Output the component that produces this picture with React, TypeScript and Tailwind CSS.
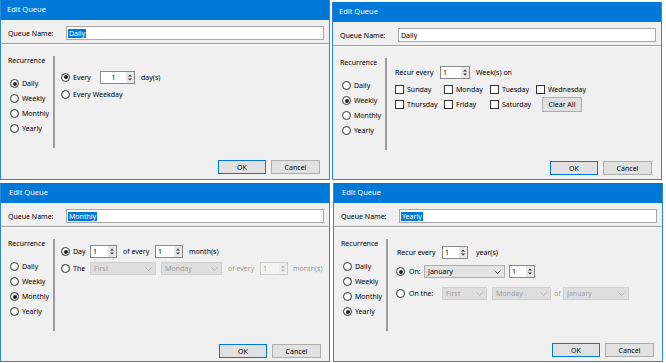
import React from "react";

type RadioProps = { checked?: boolean; label: string; className?: string; textClass?: string };

function Radio({ checked, label, className = "", textClass = "" }: RadioProps) {
  return (
    <div className={`flex items-center gap-[3px] ${className}`}>
      <span className="w-[9px] h-[9px] shrink-0 rounded-full border border-[#333333] bg-white flex items-center justify-center">
        {checked && <span className="w-[4px] h-[4px] rounded-full bg-[#222222]" />}
      </span>
      <span className={`whitespace-nowrap ${textClass}`}>{label}</span>
    </div>
  );
}

function Check({ label, className = "" }: { label: string; className?: string }) {
  return (
    <div className={`flex items-center gap-[3px] ${className}`}>
      <span className="w-[9px] h-[9px] shrink-0 border border-[#333333] bg-white" />
      <span className="whitespace-nowrap">{label}</span>
    </div>
  );
}

function Spinner({ className = "", value = "1", center = false, disabled = false }: { className?: string; value?: string; center?: boolean; disabled?: boolean }) {
  return (
    <div className={`h-[13px] flex border ${disabled ? "border-[#cccccc] bg-[#f4f4f4] text-[#a0a0a0]" : "border-[#8a8a8a] bg-white"} ${className}`}>
      <div className={`flex-1 flex items-center leading-none ${center ? "justify-center" : "pl-[2px]"}`}>{value}</div>
      <div className={`w-[8px] flex items-center justify-center ${disabled ? "bg-[#eeeeee]" : "bg-[#e8e8e8]"}`}>
        <svg width="6" height="9" viewBox="0 0 6 9">
          <path d="M1 3.5 L3 1.5 L5 3.5 Z" fill={disabled ? "#a8a8a8" : "#333333"} />
          <path d="M1 5.5 L3 7.5 L5 5.5 Z" fill={disabled ? "#a8a8a8" : "#333333"} />
        </svg>
      </div>
    </div>
  );
}

function Dropdown({ className = "", value, disabled = false }: { className?: string; value: string; disabled?: boolean }) {
  return (
    <div className={`h-[13px] flex items-center border pl-[3px] pr-[3px] ${disabled ? "border-[#d0d0d0] bg-[#dedede] text-[#9e9e9e]" : "border-[#adadad] bg-[#e3e3e3] text-black"} ${className}`}>
      <span className="flex-1 leading-none whitespace-nowrap">{value}</span>
      <svg width="7" height="4" viewBox="0 0 7 4">
        <path d="M0.5 0.5 L3.5 3.5 L6.5 0.5" fill="none" stroke={disabled ? "#a8a8a8" : "#444444"} strokeWidth="0.8" />
      </svg>
    </div>
  );
}

function Btn({ label, primary = false, className = "" }: { label: string; primary?: boolean; className?: string }) {
  return (
    <div className={`h-[14px] flex items-center justify-center bg-[#e1e1e1] border ${primary ? "border-[#0078d7]" : "border-[#adadad]"} ${className}`}>
      {label}
    </div>
  );
}

type DialogProps = {
  className?: string;
  name: string;
  highlight?: boolean;
  selected: number;
  titlePad?: string;
  footerClass?: string;
  children: React.ReactNode;
};

function Dialog({ className = "", name, highlight = false, selected, titlePad = "pl-[6px]", footerClass = "pb-[5px] pr-[9px]", children }: DialogProps) {
  const opts = ["Daily", "Weekly", "Monthly", "Yearly"];
  return (
    <div className={`w-[330px] flex flex-col bg-[#f0f0f0] border-x border-b border-[#2c88d9] overflow-hidden ${className}`}>
      <div className={`h-[20px] shrink-0 bg-[#0078d7] text-white text-[7.5px] flex items-center ${titlePad}`}>Edit Queue</div>
      <div className="h-[23px] shrink-0 flex items-center pt-[3px] pl-[7px]">
        <div className="w-[58px]">Queue Name:</div>
        <div className="w-[258px] h-[14px] bg-white border border-[#a8a8a8] flex items-center pl-[1px]">
          <span className={`leading-[9px] px-[1px] ${highlight ? "bg-[#0078d7] text-white" : ""}`}>{name}</span>
        </div>
      </div>
      <div className="h-[2px] shrink-0 border-t border-t-[#a0a0a0] border-b border-b-white" />
      <div className="flex-1 min-h-0 flex pt-[11px]">
        <div className="w-[52px] shrink-0 pl-[7px]">
          <div className="h-[10px] leading-[10px]">Recurrence</div>
          <div className="mt-[10px] ml-[2px] flex flex-col">
            {opts.map((o, i) => (
              <Radio key={o} label={o} checked={i === selected} className="h-[15px]" />
            ))}
          </div>
        </div>
        <div className="w-[2px] h-[92px] shrink-0 bg-[#9c9c9c]" />
        <div className="flex-1 pl-[6px] flex flex-col">{children}</div>
      </div>
      <div className={`shrink-0 flex justify-end gap-[5px] ${footerClass}`}>
        <Btn label="OK" primary className="w-[48px]" />
        <Btn label="Cancel" className="w-[49px]" />
      </div>
    </div>
  );
}

export default function App() {
  const dis = "text-[#9e9e9e]";
  return (
    <div className="w-[666px] h-[363px] bg-white overflow-hidden flex flex-col text-[7px] text-black font-['Noto_Sans',sans-serif] leading-none">
      <div className="flex gap-[2px] items-start">
        {/* Daily */}
        <Dialog className="h-[180px]" name="Daily" highlight selected={0}>
          <div className="mt-[14px] h-[14px] flex items-center">
            <Radio checked label="Every" className="w-[39px]" />
            <Spinner className="w-[35px]" center />
            <span className="ml-[6px]">day(s)</span>
          </div>
          <div className="mt-[3px] h-[14px] flex items-center">
            <Radio label="Every Weekday" />
          </div>
        </Dialog>
        {/* Weekly */}
        <Dialog className="h-[178px] mt-[2px]" name="Daily" selected={1} footerClass="pb-[4px] pr-[9px]">
          <div className="mt-[8px] h-[13px] flex items-center">
            <span className="ml-[2px] w-[45px]">Recur every</span>
            <Spinner className="w-[30px]" />
            <span className="ml-[6px]">Week(s) on</span>
          </div>
          <div className="mt-[4px] h-[12px] flex items-center ml-[2px]">
            <Check label="Sunday" className="w-[49px]" />
            <Check label="Monday" className="w-[46px]" />
            <Check label="Tuesday" className="w-[46px]" />
            <Check label="Wednesday" />
          </div>
          <div className="mt-[2px] h-[15px] flex items-center ml-[2px]">
            <Check label="Thursday" className="w-[49px]" />
            <Check label="Friday" className="w-[46px]" />
            <Check label="Saturday" className="w-[52px]" />
            <Btn label="Clear All" className="w-[40px] h-[15px]" />
          </div>
        </Dialog>
      </div>
      <div className="mt-[3px] flex gap-[3px] items-start">
        {/* Monthly */}
        <Dialog className="h-[179px]" name="Monthly" highlight selected={2} titlePad="pl-[8px]" footerClass="pb-[3px] pr-[8px]">
          <div className="mt-[6px] h-[13px] flex items-center">
            <Radio checked label="Day" className="w-[29px]" />
            <Spinner className="w-[27px]" />
            <span className="ml-[6px] w-[32px]">of every</span>
            <Spinner className="w-[28px]" />
            <span className="ml-[6px]">month(s)</span>
          </div>
          <div className="mt-[4px] h-[13px] flex items-center">
            <Radio label="The" className="w-[29px]" />
            <Dropdown className="w-[66px]" value="First" disabled />
            <Dropdown className="w-[61px] ml-[5px]" value="Monday" disabled />
            <span className={`ml-[6px] w-[32px] ${dis}`}>of every</span>
            <Spinner className="w-[28px]" disabled />
            <span className={`ml-[5px] ${dis}`}>month(s)</span>
          </div>
        </Dialog>
        {/* Yearly */}
        <Dialog className="h-[179px]" name="Yearly" highlight selected={3} titlePad="pl-[8px]" footerClass="pb-[4px] pr-[8px]">
          <div className="mt-[7px] h-[13px] flex items-center">
            <span className="ml-[3px] w-[45px]">Recur every</span>
            <Spinner className="w-[26px]" />
            <span className="ml-[8px]">year(s)</span>
          </div>
          <div className="mt-[6px] h-[13px] flex items-center">
            <Radio checked label="On:" className="w-[28px] ml-[2px] gap-[4px]" />
            <Dropdown className="w-[81px]" value="January" />
            <Spinner className="w-[26px] ml-[4px]" />
          </div>
          <div className="mt-[9px] h-[13px] flex items-center">
            <Radio label="On the:" className="w-[46px] ml-[2px] gap-[4px]" />
            <Dropdown className="w-[45px]" value="First" disabled />
            <Dropdown className="w-[59px] ml-[5px]" value="Monday" disabled />
            <span className={`ml-[3px] w-[9px] ${dis}`}>of</span>
            <Dropdown className="w-[66px]" value="January" disabled />
          </div>
        </Dialog>
      </div>
    </div>
  );
}
